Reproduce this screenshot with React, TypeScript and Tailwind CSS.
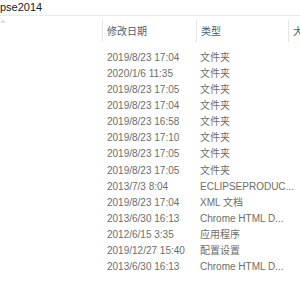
import React from 'react';

const rows: [string, string][] = [
    ["2019/8/23 17:04", "文件夹"],
    ["2020/1/6 11:35", "文件夹"],
    ["2019/8/23 17:05", "文件夹"],
    ["2019/8/23 17:04", "文件夹"],
    ["2019/8/23 16:58", "文件夹"],
    ["2019/8/23 17:10", "文件夹"],
    ["2019/8/23 17:05", "文件夹"],
    ["2019/8/23 17:05", "文件夹"],
    ["2013/7/3 8:04", "ECLIPSEPRODUC..."],
    ["2019/8/23 17:04", "XML 文档"],
    ["2013/6/30 16:13", "Chrome HTML D..."],
    ["2012/6/15 3:35", "应用程序"],
    ["2019/12/27 15:40", "配置设置"],
    ["2013/6/30 16:13", "Chrome HTML D..."],
];

const font = { fontFamily: '"Liberation Sans", "Noto Sans CJK SC", sans-serif' };

const App: React.FC = () => {
    return (
        <div className="w-[300px] h-[300px] bg-white overflow-hidden text-[10px]" style={font}>
            {/* address bar */}
            <div className="h-[16px] border-b border-[#ebebeb] flex items-center">
                <span className="text-[#1a1a1a] text-[11px] leading-none whitespace-nowrap -mt-[1px]">pse2014</span>
            </div>

            {/* column headers */}
            <div className="relative h-[33px] flex">
                <span className="absolute left-[1px] top-[3px] text-[#9a9a9a] text-[8px] leading-none">^</span>
                <div className="w-[102px] shrink-0" />
                <div className="w-[94px] shrink-0 border-l border-[#e5e5e5] mt-[4px] h-[22px] flex items-center pl-[4px] text-[#4c607a]">修改日期</div>
                <div className="w-[92px] shrink-0 border-l border-[#e5e5e5] mt-[4px] h-[22px] flex items-center pl-[4px] text-[#4c607a]">类型</div>
                <div className="w-[40px] shrink-0 border-l border-[#e5e5e5] mt-[4px] h-[22px] flex items-center pl-[4px] text-[#4c607a] whitespace-nowrap">大小</div>
            </div>

            <div>
                {rows.map(([date, type], i) => (
                    <div key={i} className="flex h-[16.15px] items-center text-[#6d6d6d] whitespace-nowrap">
                        <div className="w-[107px] shrink-0" />
                        <div className="w-[93px] shrink-0">{date}</div>
                        <div className="flex-1">{type}</div>
                    </div>
                ))}
            </div>
        </div>
    );
};

export default App;
